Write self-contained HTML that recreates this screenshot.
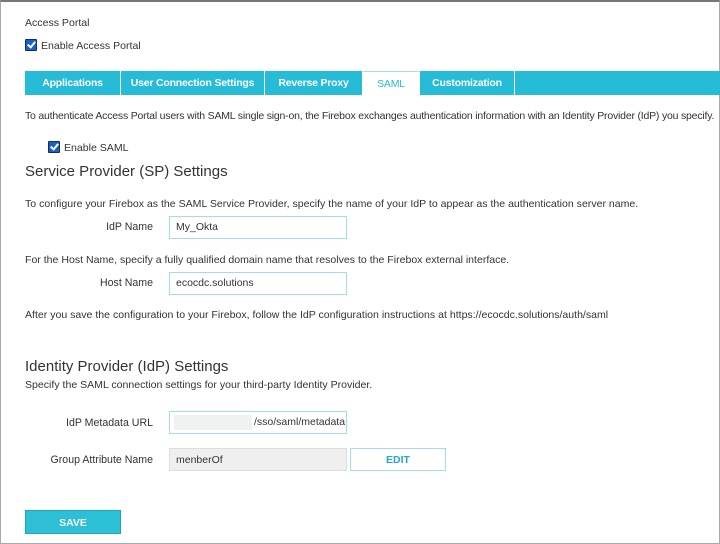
<html><head><style>
body{margin:0;width:720px;height:543px;overflow:hidden;font-family:"Liberation Sans",sans-serif;color:#333;background:#fff}
.frame{position:absolute;left:0;top:0;width:718px;height:541px;border:1px solid #aaa;border-top:2px solid #777;box-sizing:content-box}
.t{position:absolute;font-size:10.55px;white-space:nowrap}
.h{position:absolute;font-size:15px;color:#333;white-space:nowrap}
.cb{position:absolute;width:10px;height:10px;background:#1a5fd0;border:1px solid #134;border-radius:1px}
.cb:after{content:"";position:absolute;left:3px;top:0px;width:3px;height:6px;border:solid #fff;border-width:0 2px 2px 0;transform:rotate(40deg)}
.tabs{position:absolute;left:25px;top:71px;width:695px;height:24px;background:#26bcd7}
.tab{position:absolute;top:0;height:24px;line-height:24px;text-align:center;color:#fff;font-weight:bold;font-size:10.5px;border-right:1px solid #fff;box-sizing:border-box;letter-spacing:-0.2px}
.in{position:absolute;left:169px;width:178px;height:23px;border:1px solid #9fdeea;box-sizing:border-box;font-size:10.5px;line-height:21px;padding-left:6px;color:#333}
.lab{position:absolute;font-size:10.6px;text-align:right;width:160px;left:-7px}
</style></head><body>
<div class="frame"></div>
<div class="t" style="left:25px;top:17px">Access Portal</div>
<div class="cb" style="left:25px;top:39px"></div>
<div class="t" style="left:41px;top:40px">Enable Access Portal</div>
<div class="tabs">
<div class="tab" style="left:0;width:96px">Applications</div>
<div class="tab" style="left:96px;width:144px">User Connection Settings</div>
<div class="tab" style="left:240px;width:98px">Reverse Proxy</div>
<div class="tab" style="left:338px;width:57px;background:#fff;color:#26bcd7;font-weight:normal;border-top:1px solid #9fdeea">SAML</div>
<div class="tab" style="left:395px;width:95px">Customization</div>
</div>
<div class="t" style="left:25px;top:110px;font-size:10.5px;letter-spacing:-0.2px">To authenticate Access Portal users with SAML single sign-on, the Firebox exchanges authentication information with an Identity Provider (IdP) you specify.</div>
<div class="cb" style="left:48px;top:141px"></div>
<div class="t" style="left:64px;top:142px">Enable SAML</div>
<div class="h" style="left:25px;top:163px">Service Provider (SP) Settings</div>
<div class="t" style="left:25px;top:198px">To configure your Firebox as the SAML Service Provider, specify the name of your IdP to appear as the authentication server name.</div>
<div class="lab" style="top:221px">IdP Name</div>
<div class="in" style="top:216px">My_Okta</div>
<div class="t" style="left:25px;top:254px">For the Host Name, specify a fully qualified domain name that resolves to the Firebox external interface.</div>
<div class="lab" style="top:277px">Host Name</div>
<div class="in" style="top:272px">ecocdc.solutions</div>
<div class="t" style="left:25px;top:309px">After you save the configuration to your Firebox, follow the IdP configuration instructions at https://ecocdc.solutions/auth/saml</div>
<div class="h" style="left:25px;top:358px">Identity Provider (IdP) Settings</div>
<div class="t" style="left:25px;top:379px">Specify the SAML connection settings for your third-party Identity Provider.</div>
<div class="lab" style="top:417px">IdP Metadata URL</div>
<div class="in" style="top:411px"><span style="position:absolute;left:4px;top:3px;width:78px;height:15px;background:#f0f1f1"></span><span style="position:absolute;left:84px;top:0">/sso/saml/metadata</span></div>
<div class="lab" style="top:454px">Group Attribute Name</div>
<div class="in" style="top:448px;background:#efefef;border-color:#ddd;line-height:23px">menberOf</div>
<div style="position:absolute;left:350px;top:448px;width:96px;height:23px;border:1px solid #9fdeea;box-sizing:border-box;text-align:center;line-height:23px;font-size:10.5px;font-weight:bold;color:#26a6c8">EDIT</div>
<div style="position:absolute;left:25px;top:510px;width:96px;height:24px;background:#2cbfd6;border:1px solid #1aa6c0;box-sizing:border-box;text-align:center;line-height:24px;font-size:10.5px;font-weight:bold;color:#fff">SAVE</div>
</body></html>
